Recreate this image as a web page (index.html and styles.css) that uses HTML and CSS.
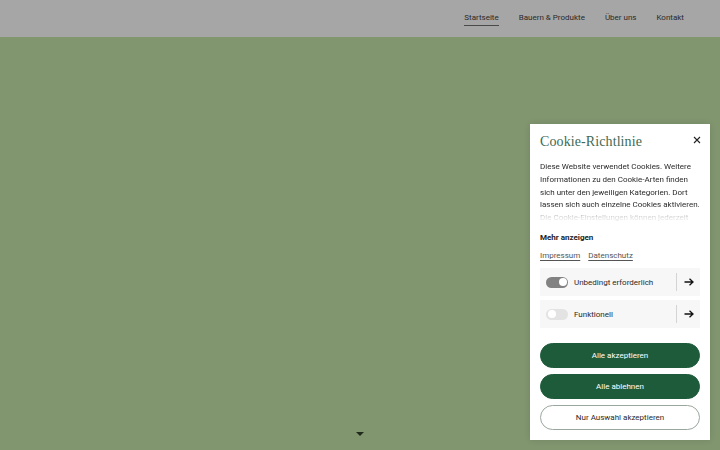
FILE: index.html
```html
<!DOCTYPE html>
<html lang="de">
<head>
<meta charset="utf-8">
<title>Cookie-Richtlinie</title>
<link rel="stylesheet" href="styles.css">
</head>
<body>
<header class="topbar">
  <nav class="nav">
    <a class="nav-link active" href="#">Startseite</a>
    <a class="nav-link" href="#">Bauern &amp; Produkte</a>
    <a class="nav-link" href="#">Über uns</a>
    <a class="nav-link" href="#">Kontakt</a>
  </nav>
</header>
<main class="hero">
  <span class="scroll-arrow"></span>
</main>
<aside class="cookie">
  <div class="cookie-head">
    <h2 class="cookie-title">Cookie-Richtlinie</h2>
    <button class="close" aria-label="Schließen">
      <svg width="8" height="8" viewBox="0 0 8 8"><path d="M1 1L7 7M7 1L1 7" stroke="#222" stroke-width="1.1" fill="none"/></svg>
    </button>
  </div>
  <p class="cookie-text">Diese Website verwendet Cookies. Weitere Informationen zu den Cookie-Arten finden sich unter den jeweiligen Kategorien. Dort lassen sich auch einzelne Cookies aktivieren. Die Cookie-Einstellungen können jederzeit geändert werden.</p>
  <div class="more">Mehr anzeigen</div>
  <div class="links"><a href="#">Impressum</a><a href="#">Datenschutz</a></div>
  <div class="cat">
    <span class="toggle on"><span class="knob"></span></span>
    <span class="cat-label">Unbedingt erforderlich</span>
    <span class="cat-arrow">
      <svg width="10" height="8" viewBox="0 0 10 8"><path d="M0.5 4H9M5.5 0.8L9 4L5.5 7.2" stroke="#111" stroke-width="1.3" fill="none"/></svg>
    </span>
  </div>
  <div class="cat">
    <span class="toggle"><span class="knob"></span></span>
    <span class="cat-label">Funktionell</span>
    <span class="cat-arrow">
      <svg width="10" height="8" viewBox="0 0 10 8"><path d="M0.5 4H9M5.5 0.8L9 4L5.5 7.2" stroke="#111" stroke-width="1.3" fill="none"/></svg>
    </span>
  </div>
  <div class="actions">
    <button class="btn primary">Alle akzeptieren</button>
    <button class="btn primary">Alle ablehnen</button>
    <button class="btn outline">Nur Auswahl akzeptieren</button>
  </div>
</aside>
</body>
</html>
```
FILE: styles.css
```css
* { box-sizing: border-box; }
html, body { margin: 0; padding: 0; }
body {
  width: 720px;
  height: 450px;
  overflow: hidden;
  font-family: Roboto, "Liberation Sans", sans-serif;
  background: #81966f;
  position: relative;
}
.topbar {
  height: 37px;
  background: #a6a6a6;
  display: flex;
  justify-content: flex-end;
  align-items: center;
  padding-right: 36px;
}
.nav { display: flex; gap: 20px; }
.nav-link {
  font-size: 8px;
  color: #2a2a2a;
  text-decoration: none;
  padding-bottom: 2px;
  border-bottom: 1.5px solid transparent;
  line-height: 11px;
}
.nav-link.active { border-bottom-color: #4a4a4a; }
.hero {
  height: 413px;
  display: flex;
  justify-content: center;
  align-items: flex-end;
  padding-bottom: 14px;
}
.scroll-arrow {
  width: 0; height: 0;
  border-left: 4px solid transparent;
  border-right: 4px solid transparent;
  border-top: 4px solid #1f2a1a;
}
.cookie {
  position: absolute;
  left: 530px;
  top: 124px;
  width: 180px;
  height: 316px;
  background: #fff;
  padding: 8px 10px 10px;
  box-shadow: 0 0 6px rgba(0,0,0,0.12);
  display: flex;
  flex-direction: column;
}
.cookie-head {
  display: flex;
  justify-content: space-between;
  align-items: flex-start;
  height: 29px;
}
.cookie-title {
  margin: 0;
  font-family: "Liberation Serif", serif;
  font-weight: normal;
  font-size: 14px;
  line-height: 18px;
  color: #3e6a55;
  padding-top: 1px;
  letter-spacing: 0.1px;
}
.close {
  background: none; border: 0; padding: 0;
  width: 8px; height: 8px;
  margin-top: 4px; margin-right: -1px;
  display: flex;
}
.cookie-text {
  margin: 0;
  font-size: 8px;
  line-height: 12.8px;
  color: #2a2a2a;
  height: 62px;
  overflow: hidden;
  -webkit-mask-image: linear-gradient(to bottom, #000 72%, rgba(0,0,0,0.12) 92%);
  mask-image: linear-gradient(to bottom, #000 72%, rgba(0,0,0,0.12) 92%);
}
.more {
  margin-top: 9px;
  font-size: 8px;
  font-weight: 700;
  color: #222;
  line-height: 12px;
}
.links {
  margin-top: 6px;
  display: flex;
  gap: 8px;
  font-size: 8px;
  line-height: 12px;
}
.links a { color: #555; text-decoration: underline; text-underline-offset: 1.5px; }
.cat {
  margin-top: 6px;
  height: 28px;
  background: #f7f7f7;
  display: flex;
  align-items: center;
  padding-left: 6px;
}
.cat + .cat { margin-top: 4px; }
.toggle {
  width: 22px; height: 11px;
  border-radius: 6px;
  background: #e3e3e3;
  position: relative;
  flex: none;
}
.toggle.on { background: #828282; }
.knob {
  position: absolute;
  top: 1.5px; left: 1.5px;
  width: 8px; height: 8px;
  border-radius: 50%;
  background: #fff;
}
.toggle.on .knob { left: 12.5px; }
.cat-label {
  margin-left: 6px;
  font-size: 8px;
  color: #2a2a2a;
  flex: 1;
}
.cat-arrow {
  width: 24px;
  height: 18px;
  border-left: 1px solid #d4d4d4;
  display: flex;
  align-items: center;
  justify-content: center;
  padding-left: 1px;
}
.actions {
  margin-top: 15px;
  display: flex;
  flex-direction: column;
  gap: 6px;
}
.btn {
  height: 25px;
  border-radius: 13px;
  font-family: Roboto, "Liberation Sans", sans-serif;
  font-size: 8px;
  border: 1px solid #1e5b3b;
  padding: 0;
}
.btn.primary { background: #1e5b3b; color: #fff; }
.btn.outline { background: #fff; color: #2a2a2a; border-color: #9aa79e; }
```
